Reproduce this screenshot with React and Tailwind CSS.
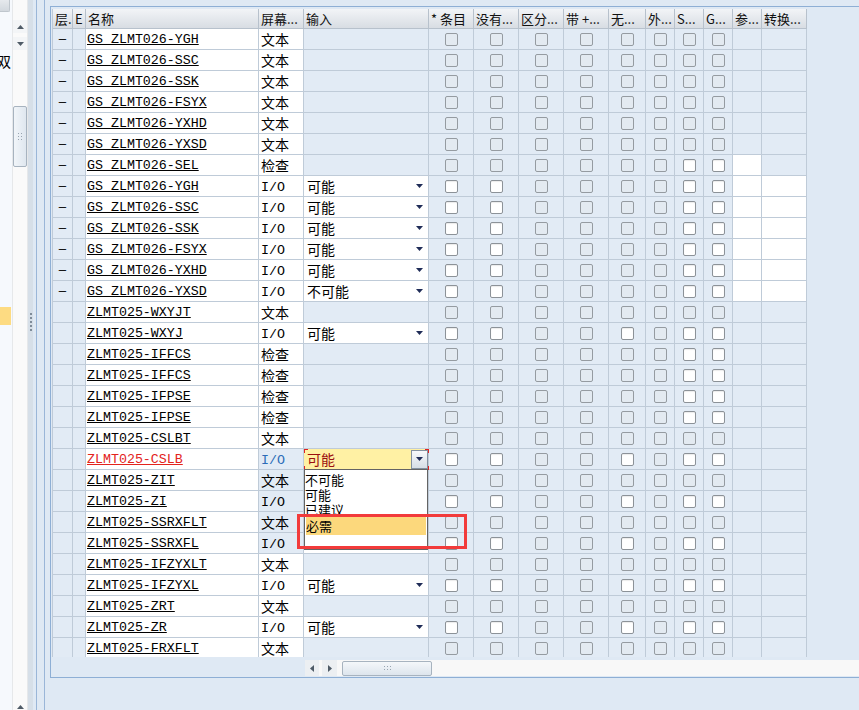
const CJK = "font-['Noto_Sans_CJK_SC',sans-serif]";
const MONO = "font-['Liberation_Mono','Noto_Sans_CJK_SC',monospace]";
const COLS =
  "grid grid-cols-[20px_13px_173px_45px_125px_45px_45px_45px_45px_37px_29px_29px_29px_29px_45px]";
const LINE = "border-r border-b border-[#bfcbd8]";

const headers = ["层.", "E", "名称", "屏幕...", "输入", "* 条目", "没有...", "区分...", "带 +...", "无...", "外...", "S...", "G...", "参...", "转换..."];

// [name, screen type, kind, group026, input value]
const rows = [
  ["GS_ZLMT026-YGH", "文本", "t", 1],
  ["GS_ZLMT026-SSC", "文本", "t", 1],
  ["GS_ZLMT026-SSK", "文本", "t", 1],
  ["GS_ZLMT026-FSYX", "文本", "t", 1],
  ["GS_ZLMT026-YXHD", "文本", "t", 1],
  ["GS_ZLMT026-YXSD", "文本", "t", 1],
  ["GS_ZLMT026-SEL", "检查", "c", 1],
  ["GS_ZLMT026-YGH", "I/O", "io", 1, "可能"],
  ["GS_ZLMT026-SSC", "I/O", "io", 1, "可能"],
  ["GS_ZLMT026-SSK", "I/O", "io", 1, "可能"],
  ["GS_ZLMT026-FSYX", "I/O", "io", 1, "可能"],
  ["GS_ZLMT026-YXHD", "I/O", "io", 1, "可能"],
  ["GS_ZLMT026-YXSD", "I/O", "io", 1, "不可能"],
  ["ZLMT025-WXYJT", "文本", "t", 0],
  ["ZLMT025-WXYJ", "I/O", "io", 0, "可能"],
  ["ZLMT025-IFFCS", "检查", "c", 0],
  ["ZLMT025-IFFCS", "检查", "c", 0],
  ["ZLMT025-IFPSE", "检查", "c", 0],
  ["ZLMT025-IFPSE", "检查", "c", 0],
  ["ZLMT025-CSLBT", "文本", "t", 0],
  ["ZLMT025-CSLB", "I/O", "io", 0, "可能"],
  ["ZLMT025-ZIT", "文本", "t", 0],
  ["ZLMT025-ZI", "I/O", "io", 0, ""],
  ["ZLMT025-SSRXFLT", "文本", "t", 0],
  ["ZLMT025-SSRXFL", "I/O", "io", 0, ""],
  ["ZLMT025-IFZYXLT", "文本", "t", 0],
  ["ZLMT025-IFZYXL", "I/O", "io", 0, "可能"],
  ["ZLMT025-ZRT", "文本", "t", 0],
  ["ZLMT025-ZR", "I/O", "io", 0, "可能"],
  ["ZLMT025-FRXFLT", "文本", "t", 0],
];

const SELECTED = 20;

const whiteBoxes = (kind, g026) => {
  if (kind === "c") return [6, 7];
  if (kind === "io") return g026 ? [0, 1, 6, 7] : [0, 1, 4, 6, 7];
  return [];
};

const Tri = ({ className = "fill-[#1f2c57]" }) => (
  <svg width="7" height="4" viewBox="0 0 7 4" className={className}>
    <polygon points="0,0 7,0 3.5,4" />
  </svg>
);

const UpTri = () => (
  <svg width="7" height="4" viewBox="0 0 7 4" className="fill-[#4f5b67]">
    <polygon points="0,4 7,4 3.5,0" />
  </svg>
);

const Box = ({ white }) => (
  <span
    className={
      white
        ? "size-[13px] rounded-[2px] border border-[#8c9298] bg-white shadow-[inset_0_1px_1px_rgba(0,0,0,0.08)]"
        : "size-[13px] rounded-[2px] border border-[#959ba1] bg-[#e3eaf1]"
    }
  />
);

const Row = ({ r, i }) => {
  const [name, type, kind, g026, value] = r;
  const sel = i === SELECTED;
  const whites = whiteBoxes(kind, g026);
  const canRef = kind !== "t" && g026;
  const canConv = kind === "io" && g026;
  const screenBlue = i >= 20 && i <= 24;
  return (
    <div className={`${COLS} h-[21px]`}>
      <div className={`${LINE} bg-[#e2ebf5] flex items-center justify-center`}>
        <span className="text-[12px] leading-none text-black font-['Liberation_Sans',sans-serif] scale-x-110">{g026 ? "–" : ""}</span>
      </div>
      <div className={`${LINE} bg-[#e2ebf5]`} />
      <div
        className={`${LINE} ${MONO} bg-white pl-[1px] overflow-hidden whitespace-nowrap text-[13.3px] leading-[22px] underline underline-offset-[1px] ${
          sel ? "text-[#e3231c] decoration-[#e3231c]" : "text-black"
        }`}
      >
        {name}
      </div>
      <div
        className={`${LINE} pl-[2px] whitespace-nowrap overflow-hidden ${screenBlue ? "bg-[#e2ebf5]" : "bg-white"} ${
          type === "I/O" ? `${MONO} text-[13.3px] leading-[23px]` : `${CJK} text-[14px] leading-[20px]`
        } ${sel ? "text-[#2b6cb8]" : "text-black"}`}
      >
        {type}
      </div>
      {kind === "io" ? (
        sel ? (
          <div className={`${LINE} relative bg-[#fff1a4] flex items-center justify-between pl-[3px]`}>
            <span className={`${CJK} text-[14px] leading-[20px] text-[#9c0f0f]`}>{value}</span>
            <span className="h-[19px] w-[17px] border border-[#8391a0] bg-linear-to-b from-[#f7f9fb] to-[#d6dee6] flex items-center justify-center">
              <Tri />
            </span>
            <span className="absolute left-0 top-0 w-[4px] h-[4px] border-l border-t border-[#e02020]" />
            <span className="absolute right-[-1px] top-0 w-[4px] h-[4px] border-r border-t border-[#e02020]" />
            <span className="absolute left-0 bottom-[-1px] w-[4px] h-[4px] border-l border-b border-[#e02020]" />
            <span className="absolute right-[-1px] bottom-[-1px] w-[4px] h-[4px] border-r border-b border-[#e02020]" />
          </div>
        ) : (
          <div className={`${LINE} bg-white flex items-center justify-between pl-[3px] pr-[5px]`}>
            <span className={`${CJK} text-[14px] leading-[20px] text-black`}>{value}</span>
            <Tri />
          </div>
        )
      ) : (
        <div className={`${LINE} bg-[#e2ebf5]`} />
      )}
      {[0, 1, 2, 3, 4, 5, 6, 7].map((c) => (
        <div key={c} className={`${LINE} bg-[#e2ebf5] flex items-center justify-center`}>
          <Box white={whites.includes(c)} />
        </div>
      ))}
      <div className={`${LINE} ${canRef ? "bg-white" : "bg-[#e2ebf5]"}`} />
      <div className={`${LINE} ${canConv ? "bg-white" : "bg-[#e2ebf5]"}`} />
    </div>
  );
};

const Dots = () => (
  <div className="grid grid-cols-2 gap-[2px]">
    {[0, 1, 2, 3, 4, 5].map((d) => (
      <span key={d} className="size-[1px] bg-[#98a4b0]" />
    ))}
  </div>
);

export default function App() {
  return (
    <div className={`flex h-[710px] w-[859px] overflow-hidden bg-[#dfe9f4] ${CJK}`}>
      {/* left side panel */}
      <div className="w-[12px] shrink-0 bg-[#f6f9fd] flex flex-col overflow-hidden">
        <div className="h-[12px] w-[10px] bg-linear-to-b from-[#e6e9ed] to-[#d2d8de] border-r border-b border-[#bfc6cd] rounded-br-[2px]" />
        <div className="mt-[41px] h-[16px] -ml-[3px] text-[14px] leading-[16px] text-black whitespace-nowrap">双</div>
        <div className="mt-[238px] h-[18px] w-[11px] bg-[#fddb82]" />
      </div>

      {/* vertical scrollbar */}
      <div className="w-[16px] shrink-0 bg-[#fafafa] border-l border-r border-[#e6e8ea] flex flex-col">
        <div className="mt-[20px] h-[13px] flex items-center justify-center bg-[#f3f5f7]">
          <UpTri />
        </div>
        <div className="mt-[4px] h-[13px] flex items-center justify-center bg-[#f3f5f7]">
          <Tri className="fill-[#4f5b67]" />
        </div>
        <div className="mt-[56px] h-[61px] rounded-[2px] border border-[#a7b3bf] bg-linear-to-r from-[#f1f5f9] to-[#dfe7ef] flex items-center justify-center">
          <Dots />
        </div>
        <div className="mt-auto mb-[1px] h-[6px] flex items-end justify-center">
          <UpTri />
        </div>
      </div>

      {/* splitter */}
      <div className="w-[5px] shrink-0 bg-[#d6dfe8] flex flex-col items-center pt-[313px] gap-[2px]">
        {[0, 1, 2, 3, 4].map((d) => (
          <span key={d} className="size-[2px] bg-[#7f8c99]" />
        ))}
      </div>

      {/* workspace */}
      <div className="flex-1 min-w-0 flex pl-[3px]">
        <div className="flex-1 min-w-0 flex border-l border-[#9ab6d8] pl-[7px]">
          <div className="flex-1 min-w-0 flex flex-col border-l border-[#9ab6d8] pl-[5px] pt-[6px]">
            <div className="border-l border-t border-b border-[#8eafd5] pl-[1px] pt-[2px] flex flex-col">
              <div className="relative h-[648px] overflow-hidden">
                <div className="w-[755px] border-l border-[#bfcbd8]">
                  <div className={`${COLS} h-[20px]`}>
                    {headers.map((h, i) => (
                      <div
                        key={i}
                        className="border-r border-b border-[#b7c1cc] bg-linear-to-b from-[#f2f4f7] to-[#d8dde3] pl-[2px] overflow-hidden whitespace-nowrap text-[13px] leading-[20px] text-[#111]"
                      >
                        {h}
                      </div>
                    ))}
                  </div>
                  {rows.map((r, i) => (
                    <Row key={i} r={r} i={i} />
                  ))}
                </div>

                {/* open dropdown list */}
                <div className="absolute left-[252px] top-[460px] w-[124px] h-[81px] bg-white border border-[#646464] pt-[2px] text-[13px] text-black">
                  <div className="h-[15px] leading-[15px]">不可能</div>
                  <div className="h-[15px] leading-[15px]">可能</div>
                  <div className="h-[13px] leading-[15px] overflow-hidden">已建议</div>
                  <div className="mt-[2px] mx-[1px] h-[18px] leading-[18px] bg-[#fcd87c]">必需</div>
                </div>

                {/* red highlight */}
                <div className="absolute left-[245px] top-[505px] w-[170px] h-[35px] border-[3px] border-[#f23b3b]" />
              </div>

              {/* horizontal scrollbar */}
              <div className="h-[20px] flex pt-[3px] pb-[1px]">
                <div className="w-[253px] shrink-0" />
                <div className="flex-1 bg-[#f8f8f8] flex items-center">
                  <div className="w-[14px] h-[16px] bg-[#eceff2] flex items-center justify-center">
                    <svg width="4" height="7" viewBox="0 0 4 7" className="fill-[#4f5b67]">
                      <polygon points="4,0 4,7 0,3.5" />
                    </svg>
                  </div>
                  <div className="ml-[3px] w-[15px] h-[16px] bg-[#eceff2] flex items-center justify-center">
                    <svg width="4" height="7" viewBox="0 0 4 7" className="fill-[#4f5b67]">
                      <polygon points="0,0 0,7 4,3.5" />
                    </svg>
                  </div>
                  <div className="ml-[5px] w-[90px] h-[15px] rounded-[2px] border border-[#a7b3bf] bg-linear-to-b from-[#f4f7fa] to-[#dde5ed] flex items-center justify-center">
                    <div className="grid grid-cols-3 gap-[2px]">
                      {[0, 1, 2, 3, 4, 5].map((d) => (
                        <span key={d} className="size-[1px] bg-[#98a4b0]" />
                      ))}
                    </div>
                  </div>
                </div>
              </div>
            </div>
          </div>
        </div>
      </div>
    </div>
  );
}
